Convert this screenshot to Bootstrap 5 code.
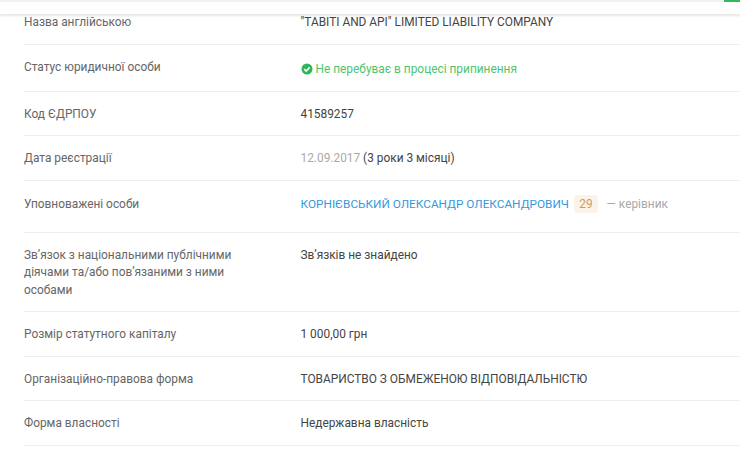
<!DOCTYPE html>
<html lang="uk">
<head>
<meta charset="utf-8">
<title>Реквізити</title>
<link rel="stylesheet" href="https://cdn.jsdelivr.net/npm/bootstrap@5.3.0/dist/css/bootstrap.min.css">
<style>
html,body{height:460px;overflow:hidden;background:#fff}
body{font-family:Roboto,"Liberation Sans",sans-serif;font-size:11.88px;line-height:17.3px;color:#444}
.topbar{height:14px;background:#fff;border-top:2px solid #f1f1f1;box-shadow:0 2px 2px rgba(0,0,0,.1);position:relative;z-index:2}
.topgreen{position:absolute;top:-2px;right:0;width:16px;height:2px;background:#3cb55f}
.info-list{margin-left:24px}
.info-row{border-bottom:1px solid #eee;padding:14.1px 0 12.2px}
.info-row:first-child{padding-top:0;padding-bottom:12.65px}
.info-label{width:276.5px;flex:none;color:#666;padding-right:60px}
.info-val{color:#444}
.ok{color:#4fc46f;padding-top:2px}
.ok svg{width:12px;height:12px;margin-right:3px;vertical-align:-2px}
.dim{color:#a9a9a9}
.person{color:#3498db;text-decoration:none;font-size:11.8px}
.age{background:#fbf3e9;color:#cf9a62;border-radius:3px;padding:3px 5.5px;margin:0 8.5px 0 2px;display:inline-block;line-height:12px;font-weight:400}
.tall{padding-top:15px;padding-bottom:18.9px}
.tall .info-val{margin-top:-1px}
</style>
</head>
<body>
<div class="topbar"><div class="topgreen"></div></div>
<div class="info-list">
<div class="info-row d-flex"><div class="info-label">Назва англійською</div><div class="info-val">"TABITI AND API" LIMITED LIABILITY COMPANY</div></div>
<div class="info-row d-flex"><div class="info-label">Статус юридичної особи</div><div class="info-val ok"><svg viewBox="0 0 12 12"><circle cx="6" cy="6" r="5.5" fill="#2fb55a"/><path d="M3.3 6.1 5.2 8l3.5-3.6" fill="none" stroke="#fff" stroke-width="1.6"/></svg>Не перебуває в процесі припинення</div></div>
<div class="info-row d-flex"><div class="info-label">Код ЄДРПОУ</div><div class="info-val">41589257</div></div>
<div class="info-row d-flex"><div class="info-label">Дата реєстрації</div><div class="info-val"><span class="dim">12.09.2017</span> (3 роки 3 місяці)</div></div>
<div class="info-row tall d-flex"><div class="info-label">Уповноважені особи</div><div class="info-val"><a class="person" href="#">КОРНІЄВСЬКИЙ ОЛЕКСАНДР ОЛЕКСАНДРОВИЧ</a> <span class="age">29</span><span class="dim">— керівник</span></div></div>
<div class="info-row d-flex"><div class="info-label">Зв’язок з національними публічними діячами та/або пов’язаними з ними особами</div><div class="info-val">Зв’язків не знайдено</div></div>
<div class="info-row d-flex"><div class="info-label">Розмір статутного капіталу</div><div class="info-val">1 000,00 грн</div></div>
<div class="info-row d-flex"><div class="info-label">Організаційно-правова форма</div><div class="info-val">ТОВАРИСТВО З ОБМЕЖЕНОЮ ВІДПОВІДАЛЬНІСТЮ</div></div>
<div class="info-row d-flex"><div class="info-label">Форма власності</div><div class="info-val">Недержавна власність</div></div>
</div>
<script src="https://cdn.jsdelivr.net/npm/bootstrap@5.3.0/dist/js/bootstrap.bundle.min.js"></script>
</body>
</html>
